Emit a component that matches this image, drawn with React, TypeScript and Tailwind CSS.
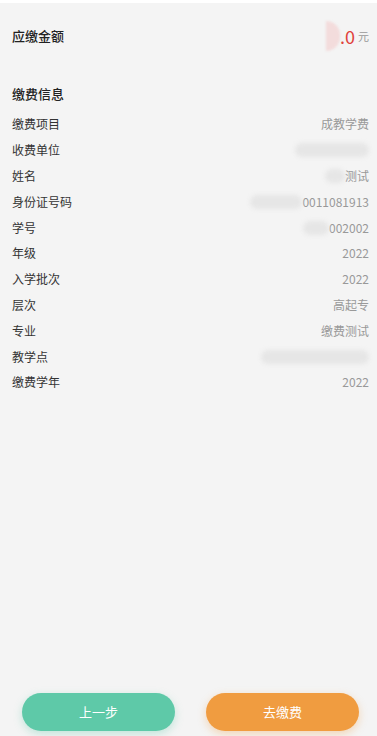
import React from "react"

const FONT = { fontFamily: '"PingFang SC", "Noto Sans CJK SC", "Noto Sans", sans-serif' }

type Row = { label: string; value: string; blur?: string }

const ROWS: Row[] = [
  { label: "缴费项目", value: "成教学费" },
  { label: "收费单位", value: "", blur: "w-[74px]" },
  { label: "姓名", value: "测试", blur: "w-[20px]" },
  { label: "身份证号码", value: "0011081913", blur: "w-[52px]" },
  { label: "学号", value: "002002", blur: "w-[26px]" },
  { label: "年级", value: "2022" },
  { label: "入学批次", value: "2022" },
  { label: "层次", value: "高起专" },
  { label: "专业", value: "缴费测试" },
  { label: "教学点", value: "", blur: "w-[108px]" },
  { label: "缴费学年", value: "2022" },
]

export default function App() {
  return (
    <div className="relative h-[736px] w-full overflow-hidden bg-[#f4f4f4] text-[#333]" style={FONT}>
      <div className="h-[3px] bg-white" />

      <div className="flex h-[66px] items-center justify-between pl-3 pr-2">
        <span className="text-[13px] font-medium text-[#222]">应缴金额</span>
        <div className="flex items-center">
          <div className="h-[30px] w-[14px] rounded-r-full bg-[#f3dcdc] blur-[1px]" />
          <span className="text-[18px] leading-none text-[#e0413b]">.0</span>
          <span className="ml-[3px] text-[11px] text-[#999]">元</span>
        </div>
      </div>

      <div className="pl-3 pr-2 pt-[15px]">
        <div className="mb-[8px] text-[13px] font-medium text-[#222]">缴费信息</div>
        {ROWS.map((r) => (
          <div key={r.label} className="flex h-[25.8px] items-center justify-between text-[12px]">
            <span className="text-[#333]">{r.label}</span>
            <div className="flex items-center">
              {r.blur && <div className={`h-[14px] rounded-full bg-[#e6e6e6] blur-[2px] ${r.blur}`} />}
              <span className="text-[#999]">{r.value}</span>
            </div>
          </div>
        ))}
      </div>

      <div className="absolute bottom-[5px] left-[22px] flex gap-[31px]">
        <button className="h-[38px] w-[153px] rounded-full bg-[#5ec9a8] text-[13px] text-white shadow-[0_3px_8px_rgba(94,201,168,0.35)]">
          上一步
        </button>
        <button className="h-[38px] w-[153px] rounded-full bg-[#f09c40] text-[13px] text-white shadow-[0_3px_8px_rgba(240,156,64,0.35)]">
          去缴费
        </button>
      </div>
    </div>
  )
}
